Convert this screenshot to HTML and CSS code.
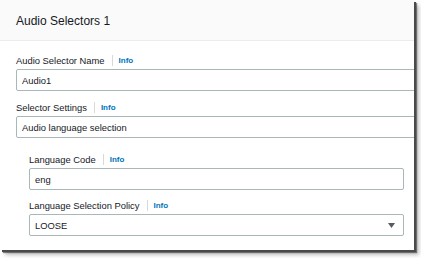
FILE: index.html
```html
<!DOCTYPE html>
<html>
<head>
<meta charset="utf-8">
<link rel="stylesheet" href="styles.css">
</head>
<body>
<div class="panel">
  <div class="panel-header">Audio Selectors 1</div>
  <div class="panel-body">
    <div class="field f1">
      <div class="label-row"><span class="label">Audio Selector Name</span><span class="sep"></span><span class="info">Info</span></div>
      <div class="input wide">Audio1</div>
    </div>
    <div class="field f2">
      <div class="label-row"><span class="label">Selector Settings</span><span class="sep"></span><span class="info">Info</span></div>
      <div class="input wide">Audio language selection</div>
    </div>
    <div class="nested">
      <div class="field">
        <div class="label-row"><span class="label">Language Code</span><span class="sep"></span><span class="info">Info</span></div>
        <div class="input">eng</div>
      </div>
      <div class="field f4">
        <div class="label-row"><span class="label">Language Selection Policy</span><span class="sep"></span><span class="info">Info</span></div>
        <div class="input select"><span>LOOSE</span><svg class="caret" width="7" height="5" viewBox="0 0 7 5"><path d="M0 0H7L3.5 5Z" fill="#545b64"/></svg></div>
      </div>
    </div>
  </div>
</div>
</body>
</html>
```
FILE: styles.css
```css
html, body {
  margin: 0;
  padding: 0;
  background: #fff;
}
body {
  font-family: "Liberation Sans", Arial, sans-serif;
  color: #16191f;
  height: 258px;
}
.panel {
  width: 414px;
  height: 250px;
  background: #fff;
  overflow: hidden;
  box-shadow: 2px 2px 0 #4a4a4a, 3px 3px 1px rgba(0, 0, 0, 0.45), 5px 5px 4px rgba(0, 0, 0, 0.25);
}
.panel-header {
  box-sizing: border-box;
  height: 41px;
  background: #fafafa;
  border-bottom: 1px solid #eaeded;
  display: flex;
  align-items: center;
  padding-left: 16px;
  padding-top: 1px;
  font-size: 12px;
}
.panel-body {
  padding-left: 16px;
  padding-top: 14px;
}
.field {
  display: flex;
  flex-direction: column;
}
.f2 {
  margin-top: 11px;
}
.f4 {
  margin-top: 10px;
}
.label-row {
  box-sizing: border-box;
  display: flex;
  align-items: center;
  height: 14px;
  padding-bottom: 3px;
}
.label {
  font-size: 9.4px;
  color: #16191f;
}
.sep {
  width: 1px;
  height: 11px;
  background: #d5dbdb;
  margin: 0 6px 0 7px;
}
.info {
  font-size: 8px;
  font-weight: bold;
  color: #0073bb;
}
.input {
  box-sizing: border-box;
  height: 22px;
  border: 1px solid #aab7b8;
  border-radius: 2px;
  padding-left: 5px;
  font-size: 9.4px;
  display: flex;
  align-items: center;
}
.wide {
  width: 420px;
}
.nested {
  margin-top: 16px;
  margin-left: 13px;
  width: 375px;
}
.select {
  justify-content: space-between;
  padding-right: 8px;
}
.caret {
  display: block;
}
```
